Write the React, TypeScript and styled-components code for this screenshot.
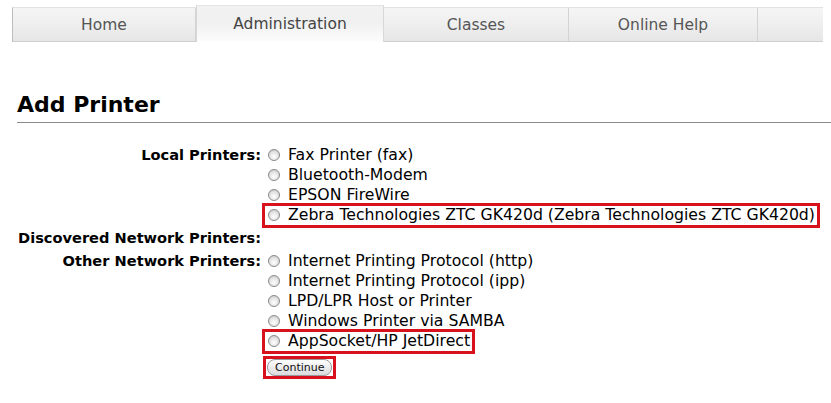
import React from "react";
import styled, { createGlobalStyle, css } from "styled-components";

const Global = createGlobalStyle`
  html, body { margin: 0; padding: 0; background: #ffffff; }
  body { font-family: "DejaVu Sans", "Liberation Sans", sans-serif; color: #000; }
`;

const Page = styled.div`
  width: 831px;
  height: 403px;
  overflow: hidden;
  background: #fff;
`;

const TabBar = styled.div`
  display: flex;
  margin: 7px 8px 0 12px;
  height: 35px;
  border-left: 1px solid #bdbdbd;
  background: linear-gradient(#f5f5f5, #ededed 60%, #e6e6e6);
  border-top: 1px solid #e2e2e2;
  border-bottom: 1px solid #cfcfcf;
  box-sizing: border-box;
`;

const Tab = styled.div<{ $w: number; $active?: boolean; $last?: boolean }>`
  width: ${(p) => p.$w}px;
  flex: ${(p) => (p.$last ? "1 1 0" : "none")};
  display: flex;
  align-items: center;
  justify-content: center;
  font-size: 15.5px;
  color: #555;
  border-right: 1px solid ${(p) => (p.$last ? "transparent" : "#d3d3d3")};
  box-sizing: border-box;
  ${(p) =>
    p.$active &&
    css`
      margin-top: -3px;
      height: 37px;
      color: #444;
      background: linear-gradient(#f2f2f2, #f0f0f0 45%, #fdfdfd);
      border-left: 1px solid #d8d8d8;
      border-right: 1px solid #d8d8d8;
      border-top: 1px solid #e4e4e4;
    `}
`;

const Heading = styled.h1`
  margin: 50px 0 0 17px;
  padding: 0 0 4px 0;
  font-size: 22px;
  font-weight: bold;
  line-height: 26px;
  border-bottom: 1px solid #8a8a8a;
`;

const Form = styled.div`
  display: grid;
  grid-template-columns: 261px 1fr;
  margin-top: 22px;
`;

const Label = styled.div<{ $gap?: number }>`
  text-align: right;
  font-weight: bold;
  font-size: 14.6px;
  line-height: 20px;
  padding-top: ${(p) => p.$gap ?? 0}px;
  white-space: nowrap;
`;

const Options = styled.div<{ $gap?: number }>`
  display: flex;
  flex-direction: column;
  padding-top: ${(p) => p.$gap ?? 0}px;
`;

const Option = styled.label<{ $mark?: boolean }>`
  position: relative;
  display: flex;
  align-items: center;
  height: 20px;
  font-size: 15.7px;
  line-height: 20px;
  white-space: nowrap;
  align-self: flex-start;
  ${(p) =>
    p.$mark &&
    css`
      &::after {
        content: "";
        position: absolute;
        left: 1px;
        right: -5px;
        top: -2px;
        bottom: -3px;
        border: 3px solid #d8121c;
      }
    `}
`;

const Radio = styled.span`
  width: 12px;
  height: 12px;
  border-radius: 50%;
  margin: 0 8px 0 7px;
  box-sizing: border-box;
  border: 1px solid #8a8a8a;
  background: radial-gradient(circle at 50% 65%, #ffffff 0%, #e2e2e2 55%, #bdbdbd 100%);
  flex: none;
`;

const ButtonRow = styled.div`
  grid-column: 2;
  padding-top: 5px;
`;

const ButtonWrap = styled.div`
  position: relative;
  display: inline-flex;
  padding: 2px 4px 2px 6px;
  &::after {
    content: "";
    position: absolute;
    left: 2px;
    right: 0;
    top: -1px;
    bottom: -1px;
    border: 3px solid #d8121c;
  }
`;

const Button = styled.span`
  display: inline-block;
  font-size: 11px;
  line-height: 13px;
  padding: 1px 7px 1px 7px;
  border: 1px solid #9a9a9a;
  border-radius: 8px;
  background: linear-gradient(#ffffff, #ececec 50%, #dcdcdc);
  color: #111;
`;

const local = [
  { t: "Fax Printer (fax)" },
  { t: "Bluetooth-Modem" },
  { t: "EPSON FireWire" },
  { t: "Zebra Technologies ZTC GK420d (Zebra Technologies ZTC GK420d)", m: true },
];

const other = [
  { t: "Internet Printing Protocol (http)" },
  { t: "Internet Printing Protocol (ipp)" },
  { t: "LPD/LPR Host or Printer" },
  { t: "Windows Printer via SAMBA" },
  { t: "AppSocket/HP JetDirect", m: true },
];

export default function App() {
  return (
    <Page>
      <Global />
      <TabBar>
        <Tab $w={183}>Home</Tab>
        <Tab $w={188} $active>Administration</Tab>
        <Tab $w={185}>Classes</Tab>
        <Tab $w={189}>Online Help</Tab>
        <Tab $w={0} $last />
      </TabBar>
      <Heading>Add Printer</Heading>
      <Form>
        <Label>Local Printers:</Label>
        <Options>
          {local.map((o) => (
            <Option key={o.t} $mark={o.m}>
              <Radio />
              {o.t}
            </Option>
          ))}
        </Options>
        <Label $gap={3}>Discovered Network Printers:</Label>
        <Options $gap={3} />
        <Label $gap={3}>Other Network Printers:</Label>
        <Options $gap={3}>
          {other.map((o) => (
            <Option key={o.t} $mark={o.m}>
              <Radio />
              {o.t}
            </Option>
          ))}
        </Options>
        <ButtonRow>
          <ButtonWrap>
            <Button>Continue</Button>
          </ButtonWrap>
        </ButtonRow>
      </Form>
    </Page>
  );
}
